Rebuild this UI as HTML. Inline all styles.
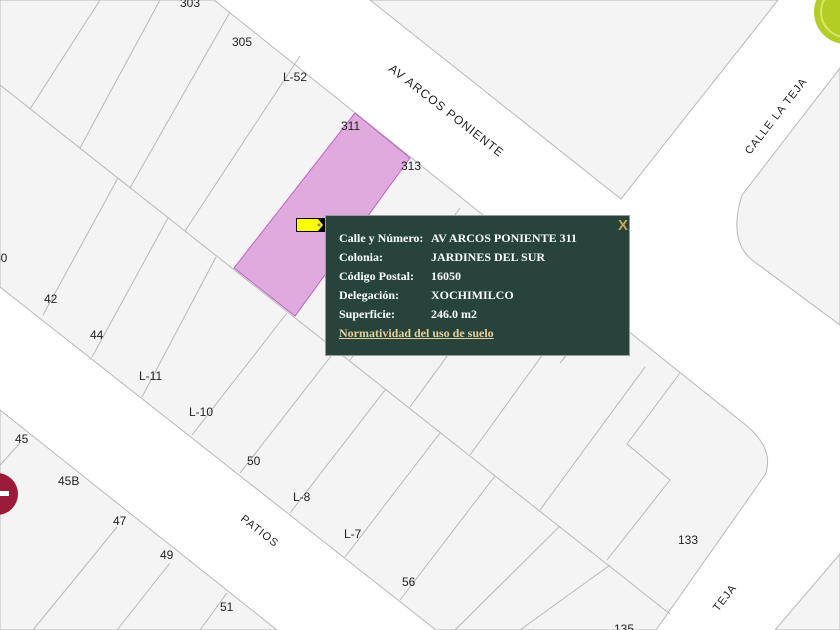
<!DOCTYPE html>
<html><head><meta charset="utf-8"><style>
html,body{margin:0;padding:0;width:840px;height:630px;overflow:hidden;background:#fff}
svg{position:absolute;left:0;top:0}
.pop{position:absolute;left:325px;top:215px;width:303px;height:139px;background:#26443c;border:1px solid #9a9a9a;font-family:"Liberation Serif",serif;font-weight:bold;font-size:12px;color:#fff}
.row{position:absolute;left:13px;white-space:nowrap}
.row span{position:absolute;left:92px}
.x{position:absolute;right:1px;top:1px;color:#c9a35e;font-family:"Liberation Sans",sans-serif;font-size:15px;font-weight:bold}
a{color:#e8cf9a;text-decoration:underline}
</style></head><body>
<svg width="840" height="630" viewBox="0 0 840 630" font-family="Liberation Sans, sans-serif" font-size="12">
<rect width="840" height="630" fill="#fff"/>
<g fill="#f4f4f4" stroke="#b8b8b8" stroke-width="1">
<path d="M0,0 L214,0 L747,426 Q775,450 765,475 L656,630 L436,630 L0,287 Z"/>
<path d="M0,410 L277,630 L0,630 Z"/>
<path d="M370,0 L621,199 L778,0 Z"/>
<path d="M840,68 L742,195 Q728,240 752,260 L840,325 Z"/>
<path d="M840,554 L775,630 L840,630 Z"/>
</g>
<g stroke="#b8b8b8" stroke-width="1" fill="none">
<path d="M0,85 L670,614"/>
<path d="M43,315 L118,178"/><path d="M92,357 L168,218"/><path d="M142,397 L216,257"/><path d="M192,435 L287,313"/>
<path d="M240,473 L335,351"/><path d="M290,513 L385,390"/><path d="M345,557 L440,433"/><path d="M400,600 L495,476"/>
<path d="M455,630 L560,526"/><path d="M520,630 L610,565"/>
<path d="M30,109 L100,0"/><path d="M80,148 L160,0"/><path d="M130,188 L230,12"/>
<path d="M185,231 L300,56"/><path d="M240,274 L355,113"/>
<path d="M350,360 L460,208"/><path d="M410,407 L520,256"/><path d="M470,455 L580,303"/>
<path d="M540,510 L645,367"/>
<path d="M560,363 L602,311"/>
<path d="M680,373 L627,444 L670,480 L607,560"/>
<path d="M0,465 L20,443"/><path d="M33,630 L117,527"/><path d="M117,630 L170,563"/><path d="M200,630 L227,593"/>
</g>
<path d="M355,113 L410,158 L295,316 L234,268 Z" fill="#dfaade" stroke="#c060c8" stroke-width="1"/>
<g fill="#222">
<text x="180" y="7">303</text><text x="232" y="46">305</text><text x="283" y="81">L-52</text>
<text x="341" y="130">311</text><text x="401" y="170">313</text><text x="466" y="227" fill="#666">317</text><text x="534" y="275">319</text>
<text x="-6" y="262">40</text><text x="44" y="303">42</text><text x="90" y="339">44</text><text x="139" y="380">L-11</text>
<text x="189" y="416">L-10</text><text x="247" y="465">50</text><text x="293" y="501">L-8</text><text x="344" y="538">L-7</text>
<text x="402" y="586">56</text><text x="15" y="443">45</text><text x="58" y="485">45B</text><text x="113" y="525">47</text>
<text x="160" y="559">49</text><text x="220" y="611">51</text><text x="678" y="544">133</text><text x="614" y="633">135</text>
<text transform="translate(388,70) rotate(38)" font-size="12" letter-spacing="1">AV ARCOS PONIENTE</text>
<text transform="translate(750,155) rotate(-52)" font-size="11" letter-spacing="1">CALLE LA TEJA</text>
<text transform="translate(240,520) rotate(38)" font-size="11" letter-spacing="1">PATIOS</text>
<text transform="translate(718,612) rotate(-52)" font-size="11" letter-spacing="1">TEJA</text>
</g>
<circle cx="-3" cy="494" r="21" fill="#9b1b3b"/><rect x="-3" y="491" width="12" height="5" fill="#fff"/>
<circle cx="846" cy="12" r="32" fill="#b4cc24"/><circle cx="846" cy="12" r="25" fill="none" stroke="#d6e86a" stroke-width="2"/>
<rect x="296" y="218" width="29" height="14" fill="#000"/><path d="M297,219 H318 L323,225 L318,231 H297 Z" fill="#ffff00"/><circle cx="319" cy="225" r="1.5" fill="#888"/>
</svg>
<div class="pop">
<div class="x">X</div>
<div class="row" style="top:15px">Calle y Número:<span>AV ARCOS PONIENTE 311</span></div>
<div class="row" style="top:34px">Colonia:<span>JARDINES DEL SUR</span></div>
<div class="row" style="top:53px">Código Postal:<span>16050</span></div>
<div class="row" style="top:72px">Delegación:<span>XOCHIMILCO</span></div>
<div class="row" style="top:91px">Superficie:<span>246.0 m2</span></div>
<div class="row" style="top:110px"><a>Normatividad del uso de suelo</a></div>
</div>
</body></html>
